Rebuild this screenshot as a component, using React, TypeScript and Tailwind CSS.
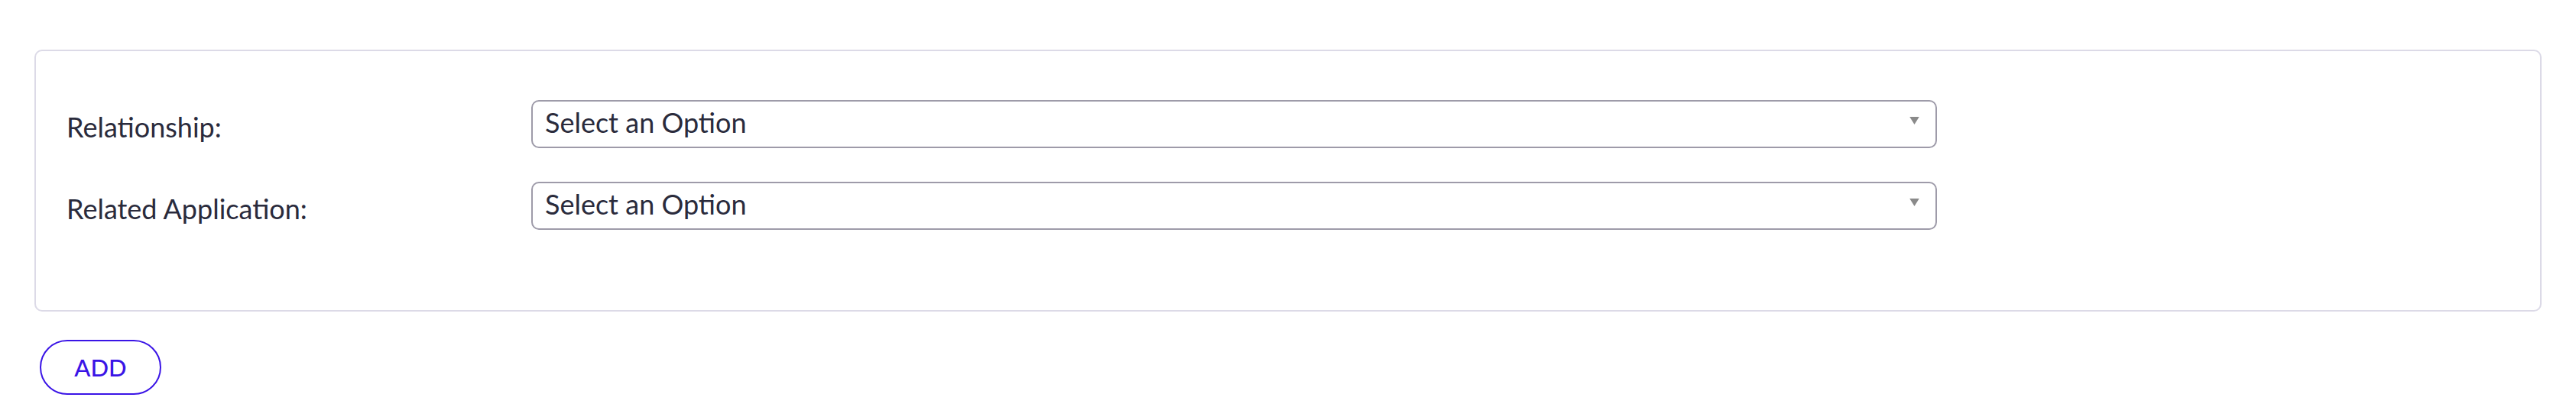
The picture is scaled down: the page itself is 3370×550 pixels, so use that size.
import { useState } from "react";

type Field = {
  id: string;
  label: string;
  options: string[];
};

const fields: Field[] = [
  { id: "relationship", label: "Relationship:", options: ["Parent", "Child", "Sibling"] },
  { id: "related-application", label: "Related Application:", options: [] },
];

function SelectBox({ id, options }: { id: string; options: string[] }) {
  const [value, setValue] = useState("");

  return (
    <div className="relative w-[1839px]">
      <select
        id={id}
        value={value}
        onChange={(e) => setValue(e.target.value)}
        className="h-[63px] w-full appearance-none rounded-[10px] border-2 border-[#9e9ba9] bg-white pb-[8px] pl-[16px] pr-12 text-[36px] text-[#2a2b3c] outline-none"
      >
        <option value="">Select an Option</option>
        {options.map((opt) => (
          <option key={opt} value={opt}>
            {opt}
          </option>
        ))}
      </select>
      <svg
        viewBox="0 0 10 8"
        className="pointer-events-none absolute right-[23px] top-[22px] h-[10px] w-[13px]"
        aria-hidden="true"
      >
        <path d="M0 0h10L5 8z" fill="#8a8a8a" />
      </svg>
    </div>
  );
}

export default function App() {
  return (
    <main className="min-h-screen bg-white px-[45px] pt-[65px] font-['Lato',sans-serif]">
      <section className="flex flex-col gap-[44px] rounded-[10px] border-2 border-[#dcdae7] px-[40px] pb-[105px] pt-[64px]">
        {fields.map((field) => (
          <div key={field.id} className="flex items-start">
            <label htmlFor={field.id} className="w-[608px] pt-[10px] text-[36px] leading-[50px] text-[#2a2b3c]">
              {field.label}
            </label>
            <SelectBox id={field.id} options={field.options} />
          </div>
        ))}
      </section>

      <button
        type="button"
        className="ml-[7px] mt-[37px] flex h-[72px] w-[159px] items-center justify-center rounded-full border-2 border-[#3a14e6] text-[31px] font-medium text-[#3a14e6]"
      >
        ADD
      </button>
    </main>
  );
}
